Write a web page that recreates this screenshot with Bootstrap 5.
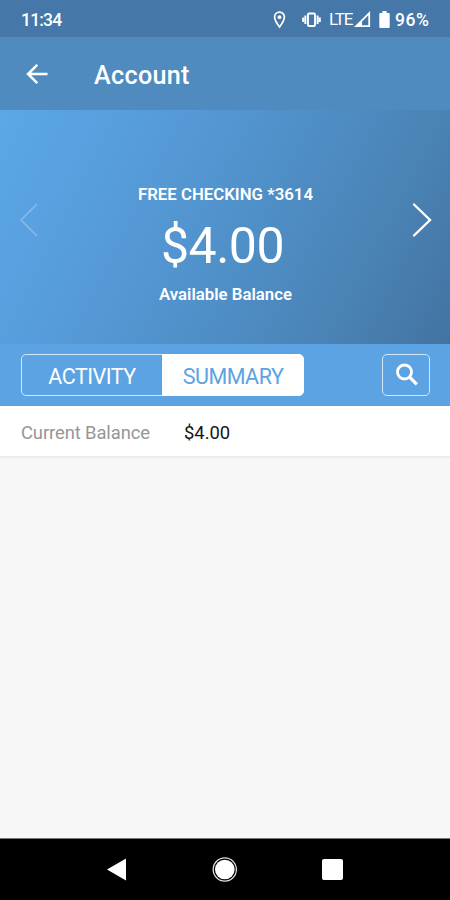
<!DOCTYPE html>
<html lang="en">
<head>
<meta charset="utf-8">
<meta name="viewport" content="width=device-width, initial-scale=1">
<title>Account</title>
<link href="https://cdn.jsdelivr.net/npm/bootstrap@5.3.0/dist/css/bootstrap.min.css" rel="stylesheet">
<style>
  body { font-family: Roboto, "Liberation Sans", sans-serif; background: #f7f7f7; height: 900px; overflow: hidden; }
  svg { display: block; flex: none; }
  .status-bar { height: 37px; background: #4577a8; padding: 2px 19px 0 21px; font-size: 17.5px; font-weight: 500; line-height: 1; }
  .status-bar .clock { letter-spacing: -.8px; padding-top: 2px; }
  .status-bar .lte { font-weight: 400; font-size: 17px; letter-spacing: -1.1px; margin: 0 3px 0 8px; width: 22px; }
  .status-bar .pct { margin-left: 5px; width: 36px; letter-spacing: .5px; padding-top: 2px; }
  .app-bar { height: 73px; background: #4f8bbf; padding: 0 24px 0 25px; }
  .app-title { font-size: 25.2px; font-weight: 500; line-height: 1; margin-left: 44px; padding-top: 4px; letter-spacing: .3px; }
  .hero { height: 234px; padding: 0 17px 0 18px; background: linear-gradient(117deg, #5ca7e7 0%, #569cda 28%, #4f8fc7 55%, #4a83b5 78%, #4373a1 100%); }
  .hero svg { margin-bottom: 14px; }
  .hero-text { font-size: 16.8px; font-weight: 600; line-height: 20px; padding-top: 34px; }
  .hero-amount { font-size: 50px; font-weight: 400; line-height: 60px; margin: 12px 6px 8px 0; letter-spacing: -.5px; }
  .toolbar { height: 62px; background: #5ba3e2; padding: 0 20px 0 21px; }
  .seg { width: 283px; height: 42px; }
  .seg .btn, .find-btn { --bs-btn-border-color: #d4e8fa; --bs-btn-color: #fff; --bs-btn-border-radius: 5px; border-width: 1.5px; }
  .seg .btn { width: 50%; padding: 4px 0 0; font-size: 21.5px; font-weight: 400; line-height: 1; letter-spacing: -.5px; }
  .seg .btn.active { --bs-btn-active-bg: #fff; --bs-btn-active-color: #5ba3e2; --bs-btn-active-border-color: #fff; }
  .find-btn { width: 48px; height: 42px; }
  .balance-row { height: 52px; background: #fff; border-bottom: 2px solid #ececec; padding: 4px 21px 0; font-size: 18.4px; line-height: 1; }
  .balance-label { color: #969696; width: 163px; letter-spacing: -.1px; }
  .balance-value { color: #161616; }
  .system-nav { height: 62px; background: #000; border-top: 1px solid #777; padding: 0 107px; }
</style>
<script src="https://cdn.jsdelivr.net/npm/bootstrap@5.3.0/dist/js/bootstrap.bundle.min.js"></script>
</head>
<body class="d-flex flex-column">
<div class="status-bar d-flex align-items-center text-white">
  <span class="clock me-auto">11:34</span>
  <svg width="13" height="18" viewBox="0 0 12 18"><path d="M6 1.200C3.200 1.200 1.100 3.300 1.100 6c0 3.500 4.900 10 4.900 10s4.900-6.500 4.900-10C10.900 3.300 8.800 1.200 6 1.200z" fill="none" stroke="#fff" stroke-width="1.700"/><circle cx="6" cy="6.200" r="1.900" fill="#fff"/></svg>
  <svg class="ms-3" width="19" height="16" viewBox="0 0 19 16"><rect x="6" y="1.500" width="7" height="12.500" rx="1" fill="none" stroke="#fff" stroke-width="1.900"/><path d="M3.400 3.500v8.500M15.600 3.500v8.500M1.200 5.500v4.500M17.800 5.500v4.500" stroke="#fff" stroke-width="2"/></svg>
  <span class="lte">LTE</span>
  <svg width="17" height="17" viewBox="0 0 17 17"><path d="M15.200 2.200v13H2.200z" fill="none" stroke="#fff" stroke-width="1.800"/><path d="M1 16 8 9v7z" fill="#fff"/></svg>
  <svg class="ms-2" width="11" height="17" viewBox="0 0 11 18"><path d="M3.300 0h4.400v2H10a1 1 0 0 1 1 1v14a1 1 0 0 1-1 1H1a1 1 0 0 1-1-1V3a1 1 0 0 1 1-1h2.300z" fill="#fff"/></svg>
  <span class="pct">96%</span>
</div>
<header class="app-bar d-flex align-items-center text-white">
  <svg width="25" height="22" viewBox="0 0 25 22"><path d="M22.500 11H3M12.300 1.800 3 11l9.300 9.200" fill="none" stroke="#fff" stroke-width="2.500"/></svg>
  <h1 class="app-title mb-0">Account</h1>
</header>
<section class="hero d-flex align-items-center justify-content-between text-white">
  <svg width="22" height="36" viewBox="0 0 22 36" opacity=".22"><path d="M19 2 3 18l16 16" fill="none" stroke="#fff" stroke-width="2"/></svg>
  <div class="hero-text text-center">
    <div>FREE CHECKING *3614</div>
    <div class="hero-amount">$4.00</div>
    <div>Available Balance</div>
  </div>
  <svg width="22" height="36" viewBox="0 0 22 36"><path d="M3 2.500 19 18 3 33.500" fill="none" stroke="#fff" stroke-width="2.400" stroke-linecap="round"/></svg>
</section>
<div class="toolbar d-flex align-items-center justify-content-between">
  <div class="btn-group seg">
    <button type="button" class="btn">ACTIVITY</button>
    <button type="button" class="btn active">SUMMARY</button>
  </div>
  <button type="button" class="btn find-btn p-0 d-flex align-items-center justify-content-center" aria-label="Search">
    <svg width="26" height="24" viewBox="0 0 26 24"><circle cx="11.500" cy="9" r="7" fill="none" stroke="#fff" stroke-width="2.800"/><path d="m16.500 14 7.300 7.300" stroke="#fff" stroke-width="3.200"/></svg>
  </button>
</div>
<div class="balance-row d-flex align-items-center">
  <div class="balance-label">Current Balance</div>
  <div class="balance-value">$4.00</div>
</div>
<main class="flex-grow-1"></main>
<nav class="system-nav d-flex align-items-center justify-content-between">
  <svg width="19" height="23" viewBox="0 0 19 23"><path d="M19 .5v22L0 11.500z" fill="#fff"/></svg>
  <svg width="25" height="25" viewBox="0 0 25 25"><circle cx="12.800" cy="12.500" r="11.600" fill="none" stroke="#ddd" stroke-width="1.300"/><circle cx="12.800" cy="12.500" r="9.800" fill="#fff"/></svg>
  <svg width="21" height="21" viewBox="0 0 21 21"><rect width="21" height="21" rx="2" fill="#fff"/></svg>
</nav>
</body>
</html>
